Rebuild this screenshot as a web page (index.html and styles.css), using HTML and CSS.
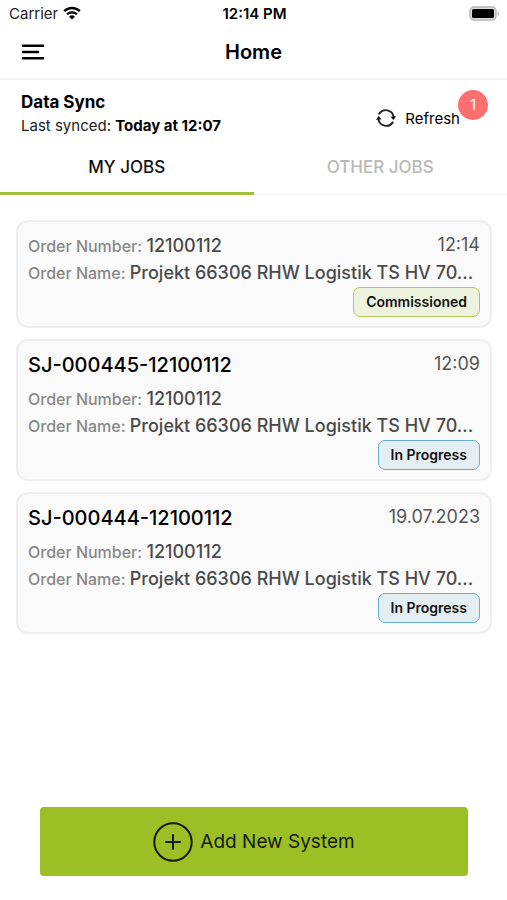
FILE: index.html
```html
<!DOCTYPE html>
<html lang="en">
<head>
    <meta charset="UTF-8">
    <meta name="viewport" content="width=device-width, initial-scale=1.0">
    <title>Home</title>
    <link rel="stylesheet" href="styles.css">
</head>
<body>
    <div class="status-bar">
        <div class="carrier">
            <span>Carrier</span>
            <svg width="18" height="14" viewBox="0 0 18 14" aria-hidden="true">
                <path d="M1.2 5.2a11.2 11.2 0 0 1 15.6 0" fill="none" stroke="#000" stroke-width="2.5"/>
                <path d="M4 8.3a7.2 7.2 0 0 1 10 0" fill="none" stroke="#000" stroke-width="2.2"/>
                <path d="M9 13.6L6 10.7a4.3 4.3 0 0 1 6 0z" fill="#000"/>
            </svg>
        </div>
        <div class="clock">12:14 PM</div>
        <svg class="battery" width="31" height="15" viewBox="0 0 31 15" aria-hidden="true">
            <rect x="1" y="1" width="26" height="13" rx="4" fill="#ddd" stroke="#b5b5b5" stroke-width="1.4"/>
            <rect x="3" y="3" width="22" height="9" rx="1.6" fill="#000"/>
            <path d="M28.6 5.2c1.8.6 1.8 4 0 4.6z" fill="#b5b5b5"/>
        </svg>
    </div>

    <header class="header">
        <button class="menu" type="button" aria-label="Menu">
            <svg width="24" height="18" viewBox="0 0 24 18" fill="none" stroke="#000" stroke-width="2.5" stroke-linecap="round">
                <path d="M2 2.8h20M2 9h15M2 15.2h20"/>
            </svg>
        </button>
        <h1>Home</h1>
    </header>

    <section class="sync">
        <div>
            <h2>Data Sync</h2>
            <p>Last synced: <strong>Today at 12:07</strong></p>
        </div>
        <button class="refresh" type="button">
            <svg width="20" height="18" viewBox="0 0 20 18" aria-hidden="true">
                <g fill="none" stroke="#222" stroke-width="1.9" stroke-linecap="round">
                    <path d="M3.2 4.6A8 8 0 0 1 17.6 7.6"/>
                    <path d="M16.8 13.4A8 8 0 0 1 2.4 10.4"/>
                </g>
                <path d="M14.6 7.8l5.4-.6-2.6 3.7z" fill="#000"/>
                <path d="M5.4 10.2l-5.4.6 2.6-3.7z" fill="#000"/>
            </svg>
            <span>Refresh</span>
            <span class="count">1</span>
        </button>
    </section>

    <nav class="tabs">
        <button class="tab active" type="button">MY JOBS</button>
        <button class="tab" type="button">OTHER JOBS</button>
    </nav>

    <main class="jobs">
        <article class="job">
            <div class="row">
                <p class="field">Order Number: <span>12100112</span></p>
                <time>12:14</time>
            </div>
            <p class="field">Order Name: <span>Projekt 66306 RHW Logistik TS HV 70...</span></p>
            <div class="badge commissioned">Commissioned</div>
        </article>

        <article class="job">
            <div class="row title">
                <h3>SJ-000445-12100112</h3>
                <time>12:09</time>
            </div>
            <p class="field">Order Number: <span>12100112</span></p>
            <p class="field">Order Name: <span>Projekt 66306 RHW Logistik TS HV 70...</span></p>
            <div class="badge progress">In Progress</div>
        </article>

        <article class="job">
            <div class="row title">
                <h3>SJ-000444-12100112</h3>
                <time>19.07.2023</time>
            </div>
            <p class="field">Order Number: <span>12100112</span></p>
            <p class="field">Order Name: <span>Projekt 66306 RHW Logistik TS HV 70...</span></p>
            <div class="badge progress">In Progress</div>
        </article>
    </main>

    <footer class="footer">
        <button class="add" type="button">
            <svg width="40" height="40" viewBox="0 0 40 40" fill="none" stroke="#141c00" stroke-width="2" stroke-linecap="round" aria-hidden="true">
                <circle cx="20" cy="20" r="18.7"/>
                <path d="M20 13v14M13 20h14"/>
            </svg>
            <span>Add New System</span>
        </button>
    </footer>
</body>
</html>
```
FILE: styles.css
```css
* {
    box-sizing: border-box;
}

body {
    margin: 0;
    min-height: 100vh;
    display: flex;
    flex-direction: column;
    background: #fff;
    color: #000;
    font-family: Inter, "Liberation Sans", sans-serif;
}

h1, h2, h3, p {
    margin: 0;
}

button {
    padding: 0;
    border: 0;
    background: none;
    color: inherit;
    font: inherit;
    cursor: pointer;
}

svg {
    display: block;
    flex: none;
}

/* Status bar */
.status-bar {
    display: grid;
    grid-template-columns: 1fr auto 1fr;
    align-items: center;
    height: 26px;
    padding: 0 7px 0 9px;
    font-size: 15px;
}

.carrier {
    display: flex;
    align-items: center;
    gap: 5px;
    color: #222;
}

.clock {
    font-weight: 600;
}

.battery {
    justify-self: end;
}

/* Header */
.header {
    display: grid;
    grid-template-columns: 1fr auto 1fr;
    align-items: center;
    height: 54px;
    padding: 0 21px;
    border-bottom: 2px solid #f5f5f5;
}

.menu {
    justify-self: start;
}

.header h1 {
    font-size: 20px;
    font-weight: 600;
}

/* Data sync */
.sync {
    display: flex;
    justify-content: space-between;
    padding: 10px 20px 0 21px;
}

.sync h2 {
    font-size: 17px;
    line-height: 24px;
    font-weight: 700;
}

.sync p {
    font-size: 15px;
    line-height: 24px;
    color: #222;
}

.sync strong {
    color: #000;
}

.refresh {
    position: relative;
    display: flex;
    align-items: center;
    gap: 9px;
    margin-right: 27px;
    padding-top: 8px;
    font-size: 15px;
}

/* sits over the corner of the refresh button */
.count {
    position: absolute;
    top: 0;
    right: -28px;
    width: 30px;
    height: 30px;
    border-radius: 50%;
    background: #fd6f6f;
    color: #fff;
    line-height: 30px;
    text-align: center;
}

/* Tabs */
.tabs {
    display: flex;
    height: 57px;
}

.tab {
    flex: 1;
    color: #b8b8b8;
    font-size: 17px;
    font-weight: 500;
    box-shadow: inset 0 -1px #f5f5f5;
}

.tab.active {
    color: #111;
    box-shadow: inset 0 -3px #a2c03b;
}

/* Job list */
.jobs {
    display: flex;
    flex-direction: column;
    flex: 1;
    gap: 11px;
    padding: 25px 15px 25px 16px;
}

.job {
    padding: 11px 10px 9px;
    border: 2px solid #eee;
    border-radius: 12px;
    background: #fafafa;
}

.row {
    display: flex;
    justify-content: space-between;
}

.row.title {
    margin-bottom: 7px;
}

.job h3 {
    font-size: 20px;
    line-height: 27px;
    font-weight: 500;
}

.job time {
    color: #555;
    font-size: 18px;
    line-height: 24px;
}

.field {
    overflow: hidden;
    color: #888;
    font-size: 16px;
    font-weight: 500;
    line-height: 27px;
    text-overflow: ellipsis;
    white-space: nowrap;
}

.field span {
    color: #4a4a4a;
    font-size: 18px;
    line-height: 20px;
}

.badge {
    width: fit-content;
    height: 30px;
    margin-left: auto;
    padding: 0 12px;
    border: 1px solid;
    border-radius: 7px;
    color: #111;
    font-size: 14px;
    font-weight: 600;
    line-height: 28px;
}

.commissioned {
    border-color: #adcb58;
    background: #edf3df;
}

.progress {
    border-color: #62afd0;
    background: #e5eef2;
}

/* Bottom action */
.footer {
    padding: 0 39px 24px 40px;
}

.add {
    display: flex;
    align-items: center;
    justify-content: center;
    gap: 7px;
    width: 100%;
    height: 69px;
    border-radius: 4px;
    background: #9dbf26;
    color: #141c00;
    font-size: 19px;
}
```
